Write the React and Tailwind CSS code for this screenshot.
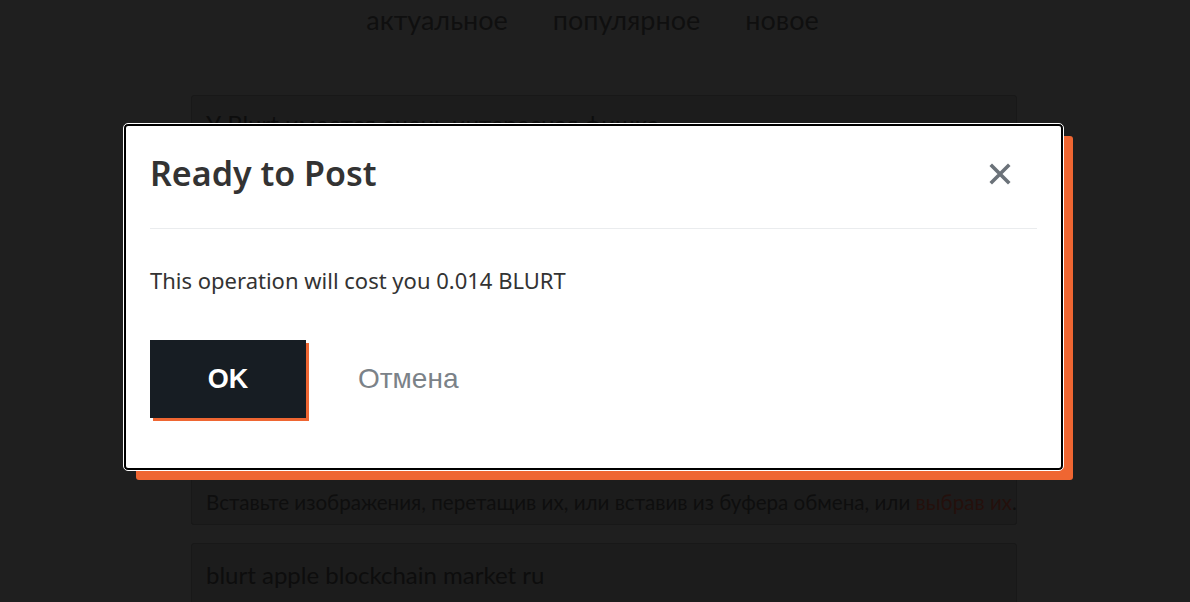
export default function App() {
  return (
    <div className="relative w-[1190px] h-[602px] overflow-hidden bg-[#1f1f1f] font-['Lato',sans-serif]">
      {/* background page, dimmed */}
      <nav className="flex justify-center gap-[45px] pr-[5px] pt-[1px] text-[27px] leading-[38px] text-[#0f0f0f]">
        <span>актуальное</span>
        <span>популярное</span>
        <span>новое</span>
      </nav>

      <div className="ml-[191px] mt-[56px] w-[826px] flex flex-col">
        <div className="h-[430px] rounded-[3px] border border-[#181818] bg-[#1c1c1c]">
          <div className="px-[14px] pt-[10px] text-[24px] text-[#0d0d0d]">У Blurt имеется очень интересная фишка</div>
        </div>
        <div className="mt-[-48px] h-[48px] whitespace-nowrap rounded-[3px] border border-[#181818] bg-[#1c1c1c] px-[14px] pt-[11px] text-[20.6px] leading-[26px] text-[#0e0e0e]">
          Вставьте изображения, перетащив их, или вставив из буфера обмена, или <span className="text-[#24100c]">выбрав их</span>.
        </div>
        <div className="mt-[18px] h-[80px] rounded-[3px] border border-[#181818] bg-[#1c1c1c] px-[14px] pt-[16px] text-[24px] leading-[30px] text-[#0d0d0d]">
          blurt apple blockchain market ru
        </div>
      </div>

      {/* modal */}
      <div className="absolute left-[124px] top-[124px] w-[939px] h-[346px] rounded-[4px] border-2 border-black bg-white outline outline-1 outline-white shadow-[11px_11px_0_-1px_#ef6632] font-['Noto_Sans',sans-serif]">
        <div className="mx-[24px] flex items-start justify-between border-b border-[#eaecee] pt-[25px] pb-[32px]">
          <h2 className="text-[34px] leading-[45px] font-semibold text-[#333333]">Ready to Post</h2>
          <button className="mr-[26px] mt-[12px] text-[#6b7279]">
            <svg width="22" height="22" viewBox="0 0 22 22">
              <path d="M3 3L19 19M19 3L3 19" stroke="currentColor" strokeWidth="3.6" strokeLinecap="square" />
            </svg>
          </button>
        </div>
        <p className="mx-[24px] mt-[36px] text-[22px] leading-[30px] text-[#333333]">
          This operation will cost you 0.014 BLURT
        </p>
        <div className="mx-[24px] mt-[45px] flex items-center">
          <button className="w-[156px] h-[78px] bg-[#171d23] text-white text-[27px] font-bold font-['Liberation_Sans',sans-serif] shadow-[3px_3px_0_0_#ef6632]">
            OK
          </button>
          <button className="ml-[52px] text-[28px] text-[#7b8288] font-['Liberation_Sans',sans-serif]">
            Отмена
          </button>
        </div>
      </div>
    </div>
  )
}
